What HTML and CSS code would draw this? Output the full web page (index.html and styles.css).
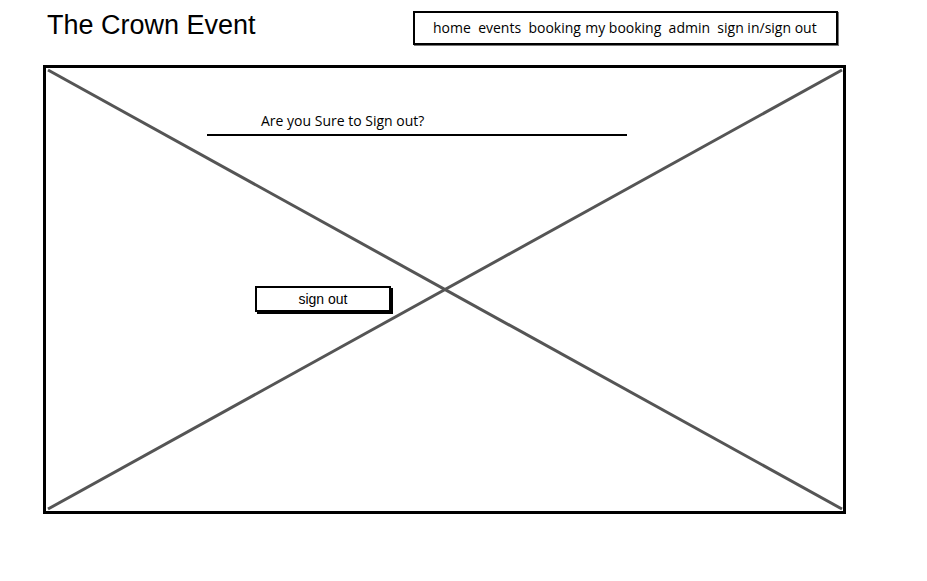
FILE: index.html
```html
<!DOCTYPE html>
<html>
<head>
<meta charset="utf-8">
<link rel="stylesheet" href="styles.css">
</head>
<body>
<header class="header">
  <h1 class="title">The Crown Event</h1>
  <nav class="nav">
    <span>home</span><span>events</span><span class="tight">booking</span><span>my booking</span><span>admin</span><span>sign in/sign out</span>
  </nav>
</header>
<main class="frame">
  <svg class="cross" viewBox="0 0 797 443" preserveAspectRatio="none">
    <line x1="2" y1="2" x2="796" y2="441" stroke="#555" stroke-width="3"/>
    <line x1="796" y1="2" x2="2" y2="441" stroke="#555" stroke-width="3"/>
  </svg>
  <div class="content">
    <div class="question">
      <p class="question-text">Are you Sure to Sign out?</p>
    </div>
    <button class="btn">sign out</button>
  </div>
</main>
</body>
</html>
```

FILE: styles.css
```css
* { box-sizing: border-box; }
body {
  margin: 0;
  font-family: "Liberation Sans", Arial, sans-serif;
  color: #000;
  background: #fff;
  width: 927px;
  height: 581px;
  overflow: hidden;
}
.header {
  display: flex;
  justify-content: space-between;
  align-items: flex-start;
  width: 838px;
  padding: 11px 0 0 47px;
  height: 65px;
}
.title {
  margin: 0;
  font-size: 27px;
  font-weight: normal;
  line-height: 29px;
}
.nav {
  width: 425px;
  height: 34px;
  border: 2px solid #000;
  box-shadow: 1px 1px 0 #777;
  display: flex;
  align-items: center;
  padding: 0 0 2px 18px;
  gap: 7.3px;
  font-family: "Open Sans", sans-serif;
  font-size: 14px;
}
.nav .tight { margin-right: -3px; }
.frame {
  position: relative;
  margin-left: 43px;
  width: 803px;
  height: 449px;
  border: 3px solid #000;
}
.cross {
  position: absolute;
  left: 0;
  top: 0;
  width: 100%;
  height: 100%;
}
.content {
  position: relative;
  padding: 43px 0 0 161px;
}
.question {
  width: 420px;
  border-bottom: 2px solid #000;
  padding-left: 54px;
}
.question-text {
  margin: 0;
  font-family: "Open Sans", sans-serif;
  font-size: 14px;
  line-height: 20px;
  padding-bottom: 3px;
}
.btn {
  display: block;
  margin: 150px 0 0 48px;
  width: 136px;
  height: 26px;
  border: 2px solid #000;
  box-shadow: 2px 2px 0 #000;
  background: #fff;
  font-family: "Liberation Sans", Arial, sans-serif;
  font-size: 14px;
  padding: 0;
}
```
